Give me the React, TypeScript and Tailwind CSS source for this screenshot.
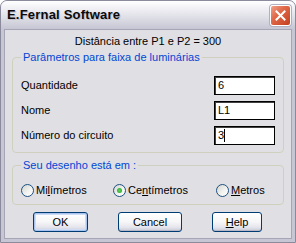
import React from "react";

const font = { fontFamily: '"Liberation Sans", Arial, sans-serif' };

function Radio({ checked }: { checked?: boolean }) {
  return (
    <span className="w-[13px] h-[13px] rounded-full border border-[#1c5180] bg-[linear-gradient(135deg,#d4d4cf_0%,#f4f4f2_60%,#ffffff_100%)] flex items-center justify-center shrink-0">
      {checked && (
        <span className="w-[5px] h-[5px] rounded-full bg-[radial-gradient(circle,#5ed35e_0%,#21a121_100%)]" />
      )}
    </span>
  );
}

function Btn({ w, children, def }: { w: string; children: React.ReactNode; def?: boolean }) {
  return (
    <div
      className={`${w} h-[20px] rounded-[3px] border border-[#003c74] bg-[linear-gradient(to_bottom,#ffffff_0%,#f6f6f8_50%,#e4e4ec_80%,#c9c9d6_100%)] flex items-center justify-center text-[11px] text-black ${
        def ? "shadow-[inset_0_0_0_1px_#a8c4ee,inset_0_0_0_2px_#cfdcf6]" : "shadow-[inset_0_-1px_0_#b8b8c8]"
      }`}
    >
      {children}
    </div>
  );
}

export default function App() {
  return (
    <div className="w-[296px] h-[243px] bg-white" style={font}>
      <div className="w-[296px] h-[243px] flex flex-col rounded-t-[7px] border border-[#8a8a9c] bg-[#c6c6d4] overflow-hidden">
        {/* Title bar */}
        <div className="h-[28px] shrink-0 flex items-center justify-between pl-[6px] pr-[4px] bg-[linear-gradient(to_bottom,#ffffff_0%,#f1f1f5_25%,#dedee6_60%,#c6c6d4_100%)]">
          <span className="text-[13px] font-bold text-[#0a0a0a] tracking-[0.2px] [text-shadow:1px_1px_0_#c0c0cc]">
            E.Fernal Software
          </span>
          <div className="w-[21px] h-[21px] rounded-[3px] border border-white bg-[linear-gradient(135deg,#f0a08a_0%,#e06848_40%,#c43e1e_100%)] flex items-center justify-center shadow-[0_0_0_1px_#b0b0c0]">
            <svg width="11" height="11" viewBox="0 0 11 11">
              <path d="M1.5 1.5 L9.5 9.5 M9.5 1.5 L1.5 9.5" stroke="white" strokeWidth="2" strokeLinecap="square" />
            </svg>
          </div>
        </div>

        {/* Client area */}
        <div className="flex-1 mx-[3px] mb-[3px] bg-[#e0dfe3] border border-[#a5a5b5] flex flex-col text-[11px] text-black">
          <div className="h-[14px] mt-[4px] leading-[14px] text-center">Distância entre P1 e P2 = 300</div>

          <fieldset className="mt-[2px] mx-[7px] h-[103px] border border-[#d0d0bf] rounded-[4px] px-[8px] pb-[7px] pt-0 m-0">
            <legend className="ml-[0px] px-[2px] text-[#0046d5] leading-[14px]">Parâmetros para faixa de luminárias</legend>
            <div className="flex flex-col gap-[6px] pt-[12px] pr-[0px]">
              {[
                ["Quantidade", "6", false],
                ["Nome", "L1", false],
                ["Número do circuito", "3", true],
              ].map(([label, val, caret]) => (
                <div key={label as string} className="flex items-center justify-between h-[19px]">
                  <span>{label}</span>
                  <div className="w-[61px] h-[19px] border border-black bg-white shadow-[inset_1px_1px_0_#404040] flex items-center pl-[3px]">
                    <span>{val}</span>
                    {caret && <span className="w-[1px] h-[13px] bg-black" />}
                  </div>
                </div>
              ))}
            </div>
          </fieldset>

          <fieldset className="mt-[5px] mx-[7px] h-[47px] border border-[#d0d0bf] rounded-[4px] px-[8px] pb-[7px] pt-0 m-0">
            <legend className="px-[2px] text-[#0046d5] leading-[14px]">Seu desenho está em :</legend>
            <div className="flex items-center h-[14px] mt-[11px]">
              <div className="w-[92px] flex items-center gap-[2px]">
                <Radio />
                <span>
                  Mi<u>l</u>ímetros
                </span>
              </div>
              <div className="w-[103px] flex items-center gap-[2px]">
                <Radio checked />
                <span>
                  Ce<u>n</u>tímetros
                </span>
              </div>
              <div className="flex items-center gap-[2px]">
                <Radio />
                <span>
                  <u>M</u>etros
                </span>
              </div>
            </div>
          </fieldset>

          <div className="mt-[7px] flex pl-[28px] gap-[30px]">
            <Btn w="w-[55px]" def>
              OK
            </Btn>
            <Btn w="w-[64px]">Cancel</Btn>
            <Btn w="w-[50px]">
              <u>H</u>elp
            </Btn>
          </div>
        </div>
      </div>
    </div>
  );
}
